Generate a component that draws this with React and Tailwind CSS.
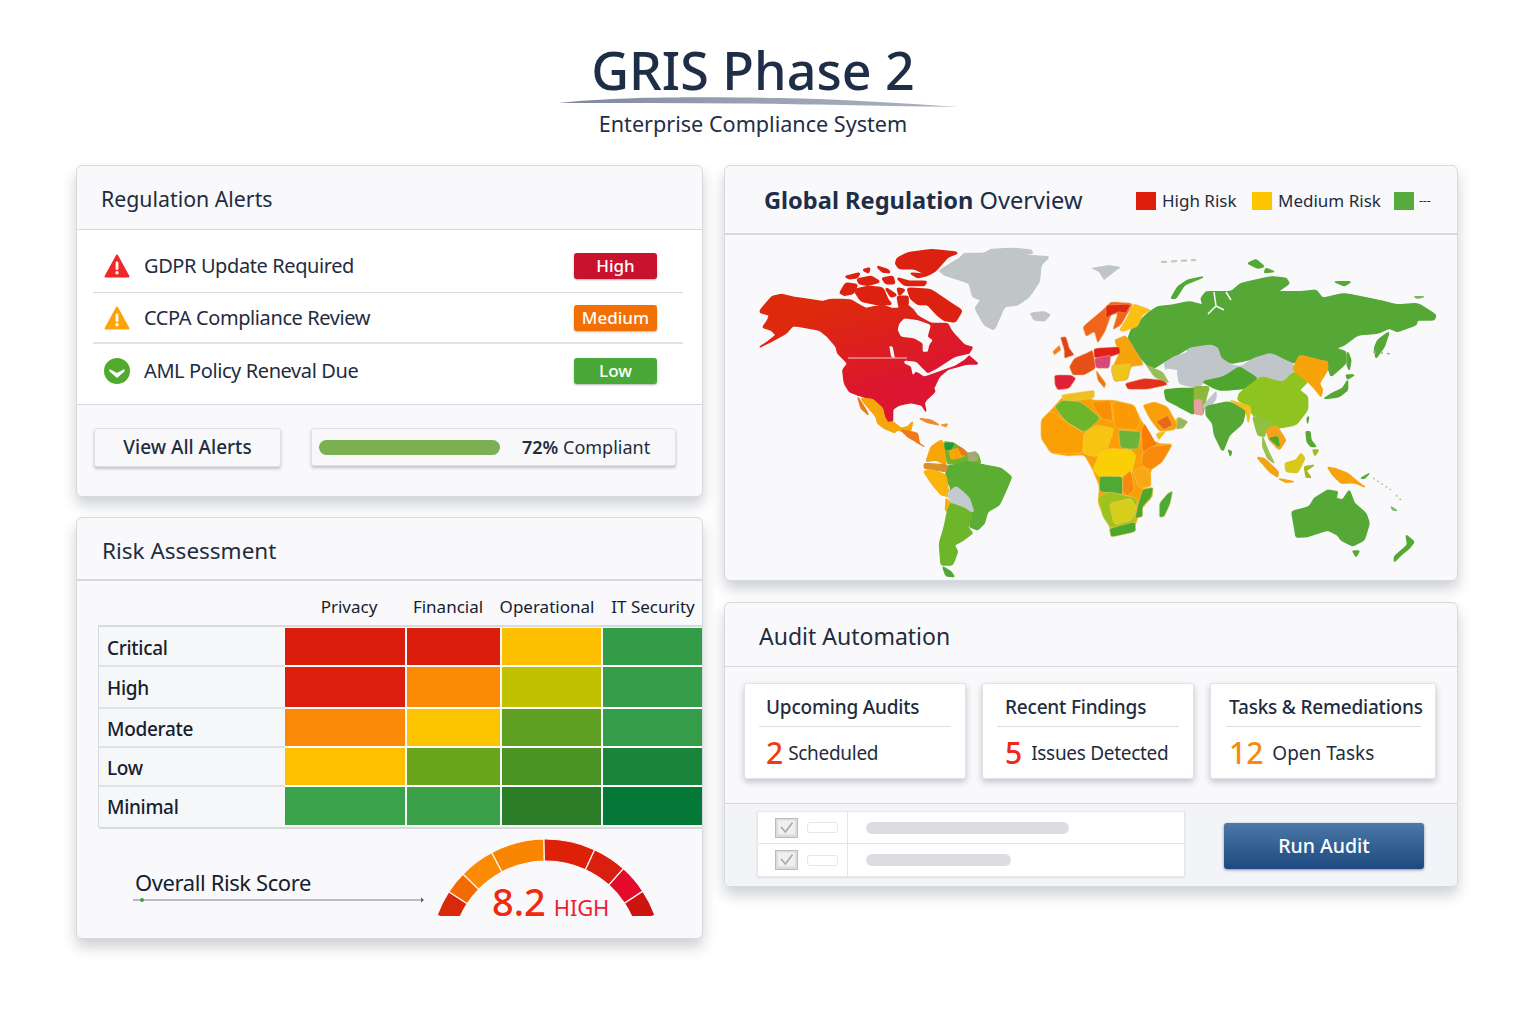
import React from "react";

const R = "#dd2110";
const americas = [
  ["url(#naRed)", "28,210 62,170 92,163 130,172 170,178 215,185 240,178 270,178 300,180 325,195 345,205 370,200 395,195 420,205 440,205 470,195 487,210 500,228 540,250 590,250 600,270 612,285 640,315 665,322 650,345 682,372 650,372 620,380 590,388 565,410 548,445 552,455 525,480 520,490 525,515 512,495 480,488 445,495 425,508 425,545 410,548 395,505 365,478 320,465 295,455 280,430 275,390 290,370 260,340 255,320 230,290 205,270 140,258 125,258 105,280 60,305 25,322 50,305 75,285 60,270 35,262 50,240 55,225 28,218"],
  ["#f7f8fa", "445,250 460,235 500,240 540,255 530,290 545,300 535,315 530,335 515,335 515,310 490,295 450,290 440,270"],
  ["#f7f8fa", "460,362 495,365 515,385 530,400 560,385 610,352 660,340 640,360 610,378 570,392 520,410 505,400 495,395 485,405 480,380 460,370"],
  ["#f7f8fa", "415,318 425,320 432,355 420,350"],
  [R, "268,158 285,130 318,135 305,160 280,165"],
  [R, "310,150 350,140 395,145 410,180 420,192 375,192 330,182"],
  [R, "440,55 470,40 540,30 620,38 590,50 555,90 530,105 490,85 445,85 435,70"],
  [R, "285,110 325,100 318,112 295,115"],
  [R, "320,118 360,110 385,125 350,135 325,130"],
  [R, "395,115 425,110 430,130 405,130"],
  [R, "440,115 475,125 525,125 520,135 460,135"],
  [R, "480,100 530,105 500,112"],
  [R, "380,80 410,90 415,97 395,95"],
  [R, "338,90 355,85 352,97"],
  [R, "470,145 540,150 590,185 632,212 612,245 580,240 560,225 530,192 500,192 480,175"],
  [R, "405,145 435,165 420,170"],
  [R, "440,145 460,150 445,165"],
  [R, "440,170 470,170 470,195 445,200"],
  ["#c0c5c8", "565,92 625,55 640,40 700,40 720,28 790,25 840,30 845,40 810,45 895,50 870,75 865,125 835,170 800,195 760,200 730,270 700,255 672,205 690,180 665,170 655,130 610,115 580,105"],
  ["#c0c5c8", "838,220 880,215 897,225 880,243 850,240"],
  ["#f5a60a", "330,475 365,478 395,505 400,530 410,548 425,545 450,565 470,560 485,545 480,570 465,578 440,570 430,578 400,565 380,550 375,530 345,495"],
  ["#ec7a1c", "320,470 345,510 352,525 330,505"],
  ["#ee7a1a", "450,570 480,575 500,580 505,610 520,620 495,605 470,590"],
  ["#ee8a2a", "505,535 540,540 565,555 530,548"],
  ["#ee9a3a", "570,555 590,552 585,560"],
  ["#f9a50a", "540,620 570,600 585,620 585,675 555,660 525,665"],
  ["#6db52a", "580,605 610,610 630,625 650,640 680,640 690,670 640,670 590,672 585,640"],
  ["#f9a50a", "595,630 630,625 640,650 600,658"],
  ["#1f9a4a", "582,610 608,610 600,628 584,628"],
  ["#e57a20", "622,618 640,630 648,640 632,645"],
  ["#a6a878", "650,640 675,635 680,660 655,665"],
  ["#5cae33", "585,680 650,665 700,675 750,685 782,710 770,740 745,795 710,815 700,850 680,870 655,860 665,820 640,790 590,770 600,745 585,715"],
  ["#d9902a", "520,670 590,675 585,695 520,685"],
  ["#fab40a", "518,695 540,688 585,705 595,770 570,765 545,735"],
  ["#c3cbd1", "590,760 615,740 640,760 655,775 668,815 640,808 600,785"],
  ["#f0b010", "585,775 602,790 590,815 583,810"],
  ["#6db52a", "600,790 640,805 665,822 650,860 665,880 630,905 610,915 620,935 605,975 570,975 565,910 580,860 590,810"],
  ["#4fa83a", "575,980 600,995 610,1010 585,1008"],
];

const europe = [
  ["#f0651a", "155,110 215,60 240,35 305,40 290,70 270,105 245,120 260,70 240,75 222,125 200,160 190,125 165,140"],
  ["#e2260f", "225,45 300,42 285,70 262,65 240,75 225,85"],
  ["#fbc012", "305,40 360,60 335,75 320,110 275,125 265,120 290,80"],
  ["#e2421a", "88,142 105,140 115,175 130,195 100,205 100,180"],
  ["#f08020", "65,185 85,165 90,180 70,195"],
  ["#e8501a", "115,230 130,205 165,190 185,180 195,235 160,255 125,255"],
  ["#f6a30c", "250,150 285,135 340,225 300,230 290,270 250,275 240,240 265,190"],
  ["#e2201a", "188,175 265,170 268,190 240,200 190,205"],
  ["#e0203a", "70,255 120,255 135,265 115,295 80,300 72,285"],
  ["#d8487a", "190,205 240,195 235,235 195,235"],
  ["#f0751a", "195,240 225,280 220,295 200,270"],
  ["#ecc61a", "240,225 300,220 290,265 250,275"],
  ["#e2301f", "282,280 340,265 400,270 410,285 350,298 290,298"],
  ["#8fc060", "345,225 395,245 415,280 370,262"],
];

const africa = [
  ["#fa9f05", "30,390 60,360 95,320 190,305 180,330 250,330 310,345 330,390 380,460 425,462 395,515 360,540 355,590 335,595 365,592 365,620 330,660 315,700 310,725 240,740 235,710 200,640 205,590 185,540 160,495 110,498 60,490 30,445"],
  ["#f0c020", "90,315 190,300 190,325 100,335"],
  ["#6db52a", "70,350 95,330 150,335 210,385 160,428 105,395"],
  ["#4aa860", "40,380 60,362 75,385 50,392"],
  ["#fa8f05", "180,335 240,330 245,395 210,385"],
  ["#fb9a05", "245,332 310,345 330,395 315,420 250,415"],
  ["#fa9f05", "30,390 60,362 105,395 160,430 155,490 60,490 30,445"],
  ["#f8c412", "155,490 160,430 195,405 250,415 225,490 190,500"],
  ["#6cb33a", "262,420 330,425 322,478 268,475"],
  ["#f97d05", "330,420 345,395 380,460 360,480 335,490"],
  ["#f8d005", "185,540 205,490 240,475 300,480 315,495 305,540 300,560 205,560"],
  ["#4fa935", "205,558 275,560 275,615 205,605"],
  ["#a0c21f", "200,620 235,605 320,625 310,700 240,715 215,680"],
  ["#d6ce1a", "235,640 300,625 315,650 305,690 250,705"],
  ["#4da72d", "235,715 312,695 315,725 240,742"],
  ["#f68a10", "275,560 300,540 310,600 290,618 275,605"],
  ["#f9a815", "305,545 335,530 360,550 360,590 325,595"],
  ["#4da72d", "335,598 367,592 362,620 335,650 335,680 312,685 322,640"],
  ["#f98b0c", "360,470 425,462 395,515 360,540 330,525 335,490"],
  ["#f0c014", "380,455 375,430 430,418 455,410 470,395 440,380"],
  ["#fa9f0c", "335,345 370,335 410,350 440,405 430,420 385,425 355,385"],
  ["#e86a12", "375,395 410,375 425,405 400,420"],
  ["#94b860", "440,380 472,395 455,415 435,418"],
  ["#4faa35", "410,610 425,603 418,640 400,680 385,682 385,640"],
];

const G = "#56a836";
const asia = [
  [G, "-10,270 0,240 50,190 80,170 125,165 175,155 215,165 210,145 225,125 300,125 330,100 420,80 465,85 475,100 440,125 510,125 555,120 575,145 640,130 740,150 800,165 860,160 915,195 910,210 860,210 855,225 800,245 775,235 740,250 680,255 640,285 615,295 645,305 645,340 600,380 590,350 565,330 510,315 490,340 420,310 370,325 330,335 300,340 270,325 260,290 240,285 170,295 130,320 100,335 60,360 40,335 0,295"],
  ["#c0c5c9", "100,340 130,320 165,310 175,295 240,285 260,295 270,325 300,345 330,350 370,325 420,310 490,345 480,380 455,398 390,380 380,385 345,375 325,350 280,380 220,395 200,415 145,400 140,370 105,360"],
  ["#f7f8fa", "105,355 140,360 135,385 145,418 120,420 110,385"],
  [G, "120,145 140,110 170,90 220,80 160,105 135,145"],
  ["#4fa62f", "215,395 280,380 325,350 380,385 345,415 295,420 265,420 240,410"],
  ["#4fa62f", "100,420 145,415 200,415 190,495 135,465 105,450"],
  ["#8db83a", "190,410 235,410 225,445 215,495 190,490"],
  ["#e6a0a0", "190,450 212,450 214,495 192,492"],
  ["#c0c5c9", "215,470 255,425 255,445 235,475"],
  ["#8fc31f", "325,430 390,380 455,398 490,365 530,395 505,420 530,440 530,480 495,525 435,535 395,505 365,495 355,470 320,450"],
  [G, "225,470 290,455 345,475 335,520 295,555 275,605 250,555 245,520 225,495"],
  ["#f0c020", "295,450 360,470 352,520 345,480"],
  ["#8fc040", "365,500 395,505 430,525 405,540 400,560 380,555"],
  ["#f3a41c", "405,540 435,525 465,570 445,600 415,570"],
  ["#4da72d", "415,565 440,560 445,590"],
  ["#9cc050", "395,560 410,600 430,640 410,625 395,590"],
  ["#f2a514", "378,622 400,625 442,665 440,682 415,665"],
  ["#f2a514", "443,686 490,695 465,697"],
  ["#d9c81a", "462,640 495,630 510,610 522,625 500,668 465,665"],
  ["#a8b818", "520,650 550,645 525,662 540,682 525,682"],
  ["#f6a30c", "590,652 610,655 650,670 680,695 703,712 670,698 630,700 605,675"],
  [G, "525,545 537,545 540,570 555,590 540,590 528,575"],
  ["#a8b818", "545,600 563,600 552,617"],
  [G, "528,505 533,500 530,520"],
  [G, "292,600 302,605 298,618"],
  ["#f6a30c", "485,360 505,315 565,330 590,335 590,360 565,400 575,420 570,440 550,415 530,395"],
  [G, "580,445 600,432 635,415 650,390 650,420 625,440 590,445"],
  [G, "645,375 670,375 650,388"],
  [G, "650,305 660,330 655,360 648,345"],
  [G, "730,295 740,270 775,245 760,290 735,325"],
  [G, "482,785 535,770 550,745 590,720 620,725 615,745 635,750 655,720 670,760 705,790 715,820 700,870 665,888 630,870 620,855 590,840 530,860 495,862 490,830"],
  [G, "665,903 685,903 675,920"],
  [G, "825,855 850,875 835,895 810,915 790,935 790,920 830,885"],
  [G, "350,40 375,28 400,50 380,55"],
  [G, "405,55 430,65 400,68"],
  [G, "610,95 660,95 640,108"],
  ["#7ab860", "850,140 880,140 860,145"],
  [G, "690,685 715,670 700,685"],
  ["#8ab870", "780,770 798,782 785,780"],
];

function smooth(pts) {
  const v = pts.split(" ").map((p) => p.split(",").map(Number));
  const n = v.length;
  const t = 0.18;
  const lerp = (a, b) => `${(a[0] + (b[0] - a[0]) * t).toFixed(1)} ${(a[1] + (b[1] - a[1]) * t).toFixed(1)}`;
  let d = "";
  v.forEach((p, i) => {
    const prev = v[(i + n - 1) % n];
    const next = v[(i + 1) % n];
    d += `${i === 0 ? "M" : "L"}${lerp(p, prev)} Q${p[0]} ${p[1]} ${lerp(p, next)} `;
  });
  return d + "Z";
}

function Polys({ data, x, y, border }) {
  return (
    <g transform={`translate(${x} ${y}) scale(0.33333)`} strokeLinejoin="round">
      {data.map(([fill, pts], i) => (
        <path
          key={i}
          d={smooth(pts)}
          fill={fill}
          stroke={fill === "#f7f8fa" ? "none" : border || fill}
          strokeWidth={border ? 1.5 : fill === R ? 7 : 4}
        />
      ))}
    </g>
  );
}

function WorldMap() {
  return (
    <svg viewBox="724 235 733 345" className="block w-[733px] h-[345px]">
      <defs>
        <linearGradient id="naRed" x1="0" y1="0" x2="0.6" y2="1">
          <stop offset="0.2" stopColor="#dd2a0c" />
          <stop offset="0.8" stopColor="#dc1530" />
        </linearGradient>
      </defs>
      <Polys data={americas} x={750} y={240} />
      <path d="M847 358 H906" stroke="#f1c8c8" strokeWidth="1" fill="none" />
      <Polys data={asia} x={1130} y={250} />
      <path d="M1213 292 L1215 306 L1207 314 M1215 306 L1223 310 M1225 292 L1230 300" stroke="#f7f8fa" strokeWidth="1.5" fill="none" />
      <Polys data={africa} x={1030} y={290} border="#f4cf6a" />
      <Polys data={europe} x={1030} y={290} border="#f2b060" />
      <path d="M1137 408 L1156 441" stroke="#f7f8fa" strokeWidth="4" fill="none" />
      <polygon points="1090,268 1108,265 1120,267 1112,273 1103,280 1098,272" fill="#c0c5c9" />
      <path d="M1160 262 L1195 260" stroke="#b5cdb0" strokeWidth="2" strokeDasharray="6 4" fill="none" />
      <path d="M1372 352 L1392 354" stroke="#8fbf7a" strokeWidth="1.5" strokeDasharray="3 4" fill="none" />
      <path d="M1372 478 L1390 490 M1395 495 L1400 500" stroke="#a9c99a" strokeWidth="1.5" strokeDasharray="2 3" fill="none" />
    </svg>
  );
}

const segs = [
  [-70, -56.9, "#d8290c"],
  [-56.9, -45.7, "#f26a00"],
  [-45.7, -27.9, "#fb8b05"],
  [-27.9, -1, "#f98500"],
  [-1, 24.8, "#dc2108"],
  [24.8, 41.9, "#d91f10"],
  [41.9, 56.6, "#e40a2c"],
  [56.6, 70, "#cc1410"],
];

function arc(a0, a1) {
  const cx = 112, cy = 118, ro = 116, ri = 94;
  const p = (r, a) => {
    const t = (a * Math.PI) / 180;
    return `${(cx + r * Math.sin(t)).toFixed(2)} ${(cy - r * Math.cos(t)).toFixed(2)}`;
  };
  return `M${p(ro, a0)} A${ro} ${ro} 0 0 1 ${p(ro, a1)} L${p(ri, a1)} A${ri} ${ri} 0 0 0 ${p(ri, a0)} Z`;
}

function Gauge() {
  return (
    <div className="relative w-[224px] h-[80px] shrink-0">
      <svg viewBox="0 0 224 80" className="block w-[224px] h-[80px]">
        <defs>
          <clipPath id="gaugeClip">
            <rect x="0" y="0" width="224" height="79" />
          </clipPath>
        </defs>
        <g clipPath="url(#gaugeClip)" stroke="#fafafb" strokeWidth="1.2">
          {segs.map(([a, b, c], i) => (
            <path key={i} d={arc(a, b)} fill={c} />
          ))}
        </g>
      </svg>
      <div className="absolute left-[58px] top-[42px] flex items-baseline gap-[8px] whitespace-nowrap">
        <span className="text-[38px] leading-[44px] font-medium text-[#ee2a0f]">8.2</span>
        <span className="text-[22px] leading-[26px] tracking-[-0.2px] text-[#ee2030]">HIGH</span>
      </div>
    </div>
  );
}

function Triangle({ color }) {
  return (
    <svg viewBox="0 0 26 24" className="w-[26px] h-[24px] shrink-0">
      <path d="M13 1.5 L24.5 22.5 L1.5 22.5 Z" fill={color} stroke={color} strokeWidth="2" strokeLinejoin="round" />
      <rect x="11.6" y="7.5" width="2.8" height="8.5" rx="1.2" fill="#fff" />
      <circle cx="13" cy="18.8" r="1.7" fill="#fff" />
    </svg>
  );
}

function GreenCheck() {
  return (
    <svg viewBox="0 0 26 26" className="w-[26px] h-[26px] shrink-0">
      <circle cx="13" cy="13" r="13" fill="#4faa2e" />
      <path d="M5.5 11 L13 15 L20.5 11 L20.5 13.5 L13 20 L5.5 13.5 Z" fill="#fff" strokeLinejoin="round" />
    </svg>
  );
}

function Card({ className = "", children }) {
  return (
    <div className={`bg-[#f9f9fb] border border-[#d6d9de] rounded-md shadow-[0_8px_14px_rgba(30,40,60,0.22)] overflow-hidden ${className}`}>
      {children}
    </div>
  );
}

function AlertRow({ icon, text, badge, badgeClass, className }) {
  return (
    <div className={`flex items-center ml-[16px] mr-[19px] pl-[11px] pr-[26px] ${className}`}>
      {icon}
      <span className="ml-[14px] text-[20px] tracking-[-0.4px] text-[#1f2c40] flex-1">{text}</span>
      <span className={`w-[83px] h-[26px] rounded-[3px] flex items-center justify-center text-white text-[17px] font-medium shadow-[0_1px_2px_rgba(0,0,0,0.3)] ${badgeClass}`}>{badge}</span>
    </div>
  );
}

const heat = [
  ["Critical", 39, ["#db1d0c", "#db1d0c", "#fcc000", "#339c47"]],
  ["High", 42, ["#db1f0c", "#fb8a04", "#c0c200", "#359e48"]],
  ["Moderate", 39, ["#fb8a08", "#fdc500", "#5f9f22", "#339d4a"]],
  ["Low", 39, ["#fec000", "#69a61c", "#499423", "#1a843a"]],
  ["Minimal", 38, ["#3ba44a", "#3aa149", "#2b7d28", "#047837"]],
];
const heatW = ["w-[120px]", "w-[93px]", "w-[99px]", "flex-1"];

function Stat({ title, num, numClass, label, className, titleClass, labelClass, lineClass }) {
  return (
    <div className={`h-[96px] bg-white border border-[#e1e3e7] rounded-[3px] shadow-[0_3px_6px_rgba(30,40,60,0.25)] ${className}`}>
      <div className={`text-[19px] tracking-[-0.2px] font-medium leading-[24px] text-[#1f2c40] mt-[11px] whitespace-nowrap ${titleClass}`}>{title}</div>
      <div className={`border-t border-[#dcdee2] mt-[7px] ${lineClass}`} />
      <div className={`flex items-center h-[50px] mt-[1px] ${titleClass}`}>
        <span className={`text-[30px] font-medium leading-none ${numClass}`}>{num}</span>
        <span className={`text-[19px] text-[#1f2c40] whitespace-nowrap ${labelClass}`}>{label}</span>
      </div>
    </div>
  );
}

function MiniRow({ bar, border }) {
  return (
    <div className={`flex h-[32px] ${border ? "border-b border-[#e4e5e8]" : ""}`}>
      <div className="w-[90px] border-r border-[#e4e5e8] flex items-center pl-[17px]">
        <svg viewBox="0 0 23 20" className="w-[23px] h-[20px]">
          <rect x="0.5" y="0.5" width="22" height="19" fill="#dcdcdc" stroke="#bcbcbc" />
          <rect x="3" y="2.5" width="17" height="14" fill="#f0f0f0" />
          <path d="M6 9 L10.5 14 L17.5 4.5" fill="none" stroke="#a8a8a8" strokeWidth="1.6" />
        </svg>
        <div className="ml-[9px] w-[31px] h-[11px] bg-white border border-[#e6e7ea] rounded-[3px]" />
      </div>
      <div className="flex items-center pl-[18px]">
        <div className={`h-[12px] rounded-full bg-[#dcdde0] ${bar}`} />
      </div>
    </div>
  );
}

export default function App() {
  return (
    <div className="min-h-[1024px] bg-white font-['Noto_Sans',sans-serif] text-[#1f2c40]">
      <header className="flex flex-col items-center pt-[45px] pr-[30px] h-[165px]">
        <h1 className="text-[52px] leading-[50px] font-medium text-[#1f2e47] whitespace-nowrap">GRIS Phase 2</h1>
        <svg viewBox="558 96 400 12" className="w-[400px] h-[12px] ml-[10px] mt-[1px] shrink-0">
          <defs>
            <linearGradient id="swoosh" x1="0" x2="1" y1="0" y2="0">
              <stop offset="0" stopColor="#7f889b" />
              <stop offset="0.5" stopColor="#9aa2b2" />
              <stop offset="1" stopColor="#aab1be" />
            </linearGradient>
          </defs>
          <path d="M558 103 C620 96 720 97 780 98 C840 99 900 103 958 107 C880 106 800 104 740 103.5 C680 103 620 103 558 103Z" fill="url(#swoosh)" />
        </svg>
        <p className="text-[21.6px] leading-[24px] mt-[4px] text-[#1f2e47] whitespace-nowrap">Enterprise Compliance System</p>
      </header>

      <main className="flex items-start pl-[76px] gap-[21px]">
        <div className="w-[627px] flex flex-col gap-[20px]">
          <Card className="h-[332px]">
            <div className="h-[64px] flex items-center pl-[24px] border-b border-[#d6d9de] text-[21.3px] pt-[2px]">Regulation Alerts</div>
            <div className="bg-white border-b border-[#d6d9de]">
              <AlertRow className="h-[63px] pt-[9px] border-b border-[#d8dbe0]" icon={<Triangle color="#f0282a" />} text="GDPR Update Required" badge="High" badgeClass="bg-[#c9122e]" />
              <AlertRow className="h-[51px] border-b-2 border-[#e2e4e8]" icon={<Triangle color="#fda305" />} text="CCPA Compliance Review" badge="Medium" badgeClass="bg-[#f37004]" />
              <AlertRow className="h-[60px] pb-[6px]" icon={<GreenCheck />} text="AML Policy Reneval Due" badge="Low" badgeClass="bg-[#4aa838]" />
            </div>
            <div className="flex pl-[17px] pt-[23px] gap-[30px]">
              <button className="w-[187px] h-[39px] bg-[#f8f8fa] border border-[#dfe1e5] rounded-[3px] shadow-[0_2px_3px_rgba(30,40,60,0.25)] text-[19px] font-medium text-[#1f2c40]">View All Alerts</button>
              <div className="w-[365px] h-[38px] bg-[#f8f8fa] border border-[#dfe1e5] rounded-[3px] shadow-[0_2px_3px_rgba(30,40,60,0.25)] flex items-center pl-[7px]">
                <div className="w-[181px] h-[15px] rounded-full bg-[#7aaf52]" />
                <span className="ml-[22px] text-[18px] text-[#1f2c40]"><span className="font-semibold">72%</span> Compliant</span>
              </div>
            </div>
          </Card>

          <Card className="h-[422px]">
            <div className="h-[63px] flex items-center pl-[25px] border-b-2 border-[#d6d9de] text-[22.5px] pt-[4px]">Risk Assessment</div>
            <div className="flex ml-[21px] h-[44px] items-center text-[17px] text-[#16202e] pl-[193px] pt-[7px] whitespace-nowrap">
              <div className="w-[116px] text-center">Privacy</div>
              <div className="w-[82px] text-center">Financial</div>
              <div className="w-[116px] text-center">Operational</div>
              <div className="w-[96px] text-center">IT Security</div>
            </div>
            <div className="ml-[21px] border-t-2 border-b-2 border-l border-[#d6d9de] rounded-bl-[3px] bg-[#f6f7f9] pt-[1px] pb-[2px]">
              {heat.map(([name, h, cells], r) => (
                <div key={name} className="flex" style={{ height: h }}>
                  <div className={`w-[186px] flex items-center pl-[8px] pt-[3px] text-[19px] tracking-[-0.3px] font-medium text-[#16202e] ${r < 4 ? "border-b-2 border-[#dfe1e5]" : ""}`}>{name}</div>
                  <div className="flex-1 flex gap-[2px]">
                    {cells.map((c, i) => (
                      <div key={i} className={`${heatW[i]} ${r < 4 ? "border-b-2 border-white" : ""}`} style={{ backgroundColor: c }} />
                    ))}
                  </div>
                </div>
              ))}
            </div>
            <div className="flex pl-[56px] pt-[8px]">
              <div className="w-[301px] pt-[31px]">
                <div className="text-[22px] tracking-[-0.4px] leading-[28px] text-[#16202e] pl-[2px]">Overall Risk Score</div>
                <svg viewBox="0 0 293 8" className="block w-[293px] h-[8px]">
                  <path d="M0 4 H290" stroke="#7b8288" strokeWidth="1" />
                  <path d="M288 1.5 L291 4 L288 6.5 Z" fill="#5a6268" />
                  <circle cx="9" cy="4" r="2" fill="#3aa149" />
                </svg>
              </div>
              <Gauge />
            </div>
          </Card>
        </div>

        <div className="w-[734px] flex flex-col gap-[21px]">
          <Card className="h-[416px]">
            <div className="h-[69px] flex items-center pl-[39px] pt-[3px] border-b-2 border-[#d6d9de] whitespace-nowrap">
              <span className="text-[23.6px] w-[372px] text-[#1f2e47]"><span className="font-bold">Global Regulation</span> Overview</span>
              <span className="w-[20px] h-[18px] bg-[#dd1f0c]" />
              <span className="ml-[6px] w-[90px] text-[17px]">High Risk</span>
              <span className="w-[20px] h-[18px] bg-[#fdc500]" />
              <span className="ml-[6px] w-[116px] text-[17px]">Medium Risk</span>
              <span className="w-[20px] h-[18px] bg-[#55ab3c]" />
              <span className="ml-[5px] text-[12px]">---</span>
            </div>
            <WorldMap />
          </Card>

          <Card className="h-[285px]">
            <div className="h-[64px] flex items-center pl-[34px] pt-[3px] border-b border-[#d6d9de] text-[23px]">Audit Automation</div>
            <div className="flex pl-[19px] pt-[16px] gap-[16px] h-[137px] border-b border-[#d6d9de]">
              <Stat className="w-[222px]" title="Upcoming Audits" num="2" numClass="text-[#f23a14]" label="Scheduled" labelClass="ml-[5px] tracking-[-0.3px]" titleClass="pl-[21px]" lineClass="mx-[14px]" />
              <Stat className="w-[212px]" title="Recent Findings" num="5" numClass="text-[#f0281a]" label="Issues Detected" labelClass="ml-[9px] tracking-[-0.3px]" titleClass="pl-[22px]" lineClass="mx-[14px]" />
              <Stat className="w-[226px]" title="Tasks & Remediations" num="12" numClass="text-[#f98a08]" label="Open Tasks" labelClass="ml-[9px]" titleClass="pl-[18px]" lineClass="ml-[15px] mr-[14px]" />
            </div>
            <div className="flex items-start pl-[32px] pt-[7px] bg-[#f3f4f8] h-[83px]">
              <div className="w-[428px] bg-white border border-[#e6e7ea] shadow-[0_1px_2px_rgba(30,40,60,0.1)]">
                <MiniRow bar="w-[203px]" border />
                <MiniRow bar="w-[145px]" />
              </div>
              <button className="ml-[39px] mt-[12px] w-[200px] h-[46px] rounded-[3px] bg-gradient-to-b from-[#4c78a8] to-[#1c4a80] text-white text-[19.5px] font-medium shadow-[0_1px_3px_rgba(20,40,80,0.5)]">Run Audit</button>
            </div>
          </Card>
        </div>
      </main>
    </div>
  );
}
